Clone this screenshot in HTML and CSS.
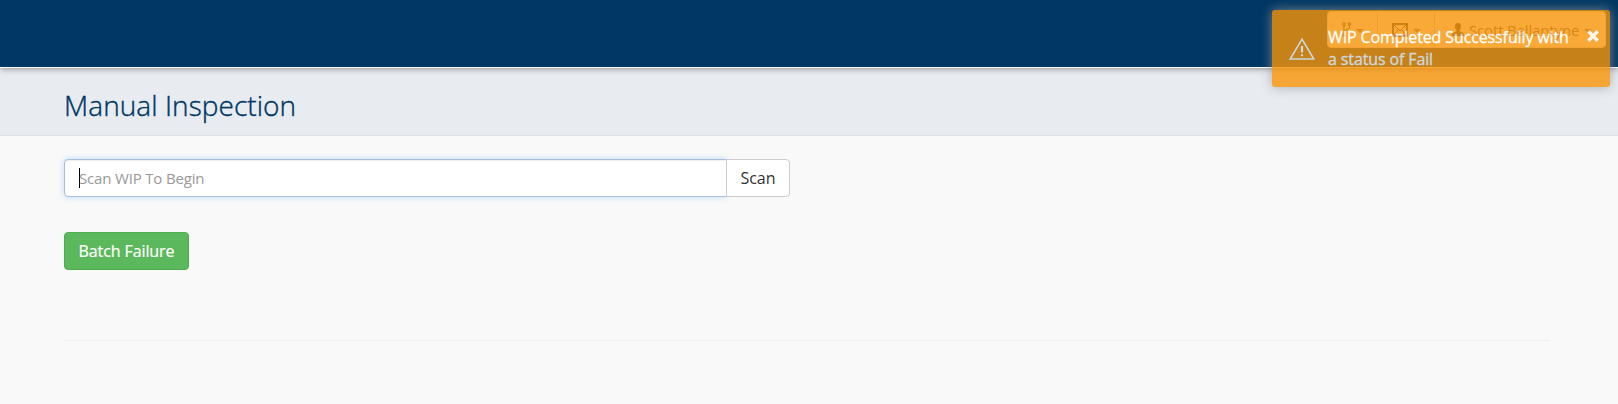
FILE: index.html
```html
<!DOCTYPE html>
<html lang="en">
<head>
<meta charset="utf-8">
<title>Manual Inspection</title>
<link rel="stylesheet" href="styles.css">
</head>
<body>
<header class="topbar">
  <div class="nav-group">
    <button class="nav-btn nav-fork"><svg width="10" height="15" viewBox="0 0 10 15" fill="none" stroke="currentColor" stroke-width="1.1"><circle cx="2" cy="2" r="1.3"/><circle cx="7.500" cy="2" r="1.3"/><circle cx="2" cy="13" r="1.3"/><path d="M2 3.300v8.400M7.500 3.300v2C7.500 8 2 7.500 2 10"/></svg><i class="caret"></i></button>
    <button class="nav-btn nav-mail"><svg width="16" height="14" viewBox="0 0 16 14" fill="none" stroke="currentColor" stroke-width="1"><path d="M1 1h14v12H1z" stroke-width="2"/><path d="M2 2l6 6 6-6M2 12l4.500-5.500M14 12L9.500 6.500"/></svg><i class="caret"></i></button>
    <button class="nav-btn nav-user"><svg width="12" height="13" viewBox="0 0 12 13" fill="currentColor"><path d="M6 0c2 0 3 1.300 3 3.500C9 5 8.400 6 7.600 6.800v1.400L11 9.700c.8.400 1 1 1 3.300H0c0-2.300.2-2.900 1-3.300l3.400-1.500V6.800C3.600 6 3 5 3 3.500 3 1.300 4 0 6 0z"/></svg><span>Scott Ballantyne</span><i class="caret"></i></button>
  </div>
</header>
<div class="page-head"><h1 class="title">Manual Inspection</h1></div>
<main class="content">
  <div class="scan-group">
    <div class="scan-input"><span class="cursor"></span><span>Scan WIP To Begin</span></div>
    <button class="scan-btn">Scan</button>
  </div>
  <button class="batch-btn">Batch Failure</button>
  <hr class="rule">
</main>
<div class="toast">
  <svg class="toast-icon" width="28" height="24" viewBox="0 0 28 24" fill="none" stroke="#fff" stroke-width="1.6"><path d="M14 2.200L25.800 22H2.200z"/><path d="M14 9v6.500M14 17.200v2" stroke-width="2.200"/></svg>
  <p class="toast-text">WIP Completed Successfully with<br>a status of Fail</p>
  <svg class="toast-close" width="12" height="12" viewBox="0 0 12 12" stroke="#fff" stroke-width="3.400"><path d="M1.300 1.300l9.400 9.400M10.700 1.300l-9.400 9.400"/></svg>
</div>
</body>
</html>
```
FILE: styles.css
```css
* { box-sizing: border-box; }
body {
  margin: 0;
  background: #f9f9f9;
  color: #333;
  font: 16px/22px "Open Sans", sans-serif;
}
button { font: inherit; color: inherit; }
.topbar {
  position: relative;
  display: flex;
  justify-content: flex-end;
  height: 68px;
  padding: 11px 12px 0 0;
  background: #003764;
  border-bottom: 1px solid #fff;
  box-shadow: 0 1px 6px rgba(0, 0, 0, .4);
}
.nav-group {
  display: flex;
  width: 279px;
  height: 37px;
  background: #fff;
  border: 1px solid #ddd;
  border-radius: 4px;
  overflow: hidden;
}
.nav-btn {
  display: flex;
  align-items: center;
  height: 35px;
  padding: 0;
  border: 0;
  border-right: 1px solid #ccc;
  background: none;
  white-space: nowrap;
}
.nav-btn:last-child { border-right: 0; }
.nav-fork { width: 50px; padding-left: 14px; gap: 4px; }
.nav-mail { width: 57px; padding-left: 14px; gap: 5px; }
.nav-user { flex: 1; padding: 0 0 0 17px; gap: 5px; }
.nav-user span { font-size: 15px; letter-spacing: -.15px; color: #555; }
.caret {
  margin-top: 2px;
  border: 4px solid transparent;
  border-top: 4px solid #777;
  border-bottom: 0;
}
.page-head {
  height: 68px;
  padding: 18px 64px 0;
  background: #e8ecf1;
  border-bottom: 1px solid #dce0ea;
}
.title {
  margin: 0;
  font-size: 28px;
  font-weight: 300;
  line-height: 38px;
  letter-spacing: .06px;
  color: #003764;
  -webkit-text-stroke: .4px #003764;
}
.content {
  display: flex;
  flex-direction: column;
  align-items: flex-start;
  padding: 23px 68px 0 64px;
}
.scan-group { display: flex; width: 726px; height: 38px; }
.scan-input {
  display: flex;
  align-items: center;
  width: 663px;
  padding-left: 14px;
  background: #fff;
  border: 1px solid #a5bfdc;
  border-radius: 4px 0 0 4px;
  box-shadow: inset 0 1px 1px rgba(0, 0, 0, .075), 0 0 6px rgba(102, 175, 233, .4);
  color: #999;
  font-size: 15px;
  letter-spacing: -.17px;
}
.cursor { width: 1px; height: 20px; margin-right: -1px; background: #000; }
.scan-btn {
  position: relative;
  flex: 1;
  margin-left: -1px;
  padding: 0;
  background: #fff;
  border: 1px solid #ccc;
  border-radius: 0 4px 4px 0;
}
.batch-btn {
  width: 125px;
  height: 38px;
  margin-top: 35px;
  padding: 0;
  background: #5cb85c;
  border: 1px solid #4cae4c;
  border-radius: 4px;
  color: #fff;
  letter-spacing: -.1px;
  -webkit-text-stroke: .2px #fff;
}
.rule {
  width: 100%;
  height: 1px;
  margin: 70px 0 0;
  border: 0;
  background: #eee;
}
.toast {
  position: absolute;
  top: 10px;
  left: 1272px;
  display: flex;
  width: 338px;
  height: 77px;
  padding: 16px 11px 0 16px;
  background: #f89406;
  border-radius: 3px;
  box-shadow: 0 0 12px #999;
  color: #fff;
  opacity: .8;
}
.toast-icon { margin-top: 11px; }
.toast-text {
  flex: 1;
  margin: 0 0 0 12px;
  white-space: nowrap;
  letter-spacing: -.12px;
  -webkit-text-stroke: .3px #fff;
}
.toast-close { margin-top: 4px; opacity: .9; }
```
